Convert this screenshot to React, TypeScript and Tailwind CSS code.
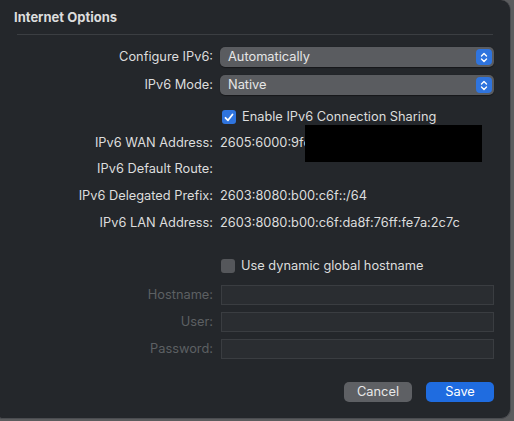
import React from 'react';

// --- small pieces of the sheet ---
const Label = ({ children, dim }: { children: React.ReactNode; dim?: boolean }) => (
  <div className={`w-[213px] shrink-0 text-right ${dim ? 'text-[#5d6063]' : 'text-[#dcdddd]'}`}>{children}</div>
);

const Stepper = () => (
  <div className="w-4 h-4 rounded-[4px] bg-[#2f74de] flex items-center justify-center">
    <svg width="8" height="11" viewBox="0 0 8 11" fill="none" stroke="white" strokeWidth="1.4" strokeLinecap="round" strokeLinejoin="round">
      <path d="M1.5 4 L4 1.5 L6.5 4" />
      <path d="M1.5 7 L4 9.5 L6.5 7" />
    </svg>
  </div>
);

const Select = ({ value }: { value: string }) => (
  <div className="flex-1 h-[20px] rounded-[5px] bg-[#5a5c60] flex items-center justify-between pl-[8px] pr-[2px] text-[#e6e6e6] shadow-[0_0.5px_1px_rgba(0,0,0,0.4)]">
    <span>{value}</span>
    <Stepper />
  </div>
);

const Check = ({ checked }: { checked: boolean }) =>
  checked ? (
    <div className="w-[14px] h-[14px] rounded-[3px] bg-[#2f74de] flex items-center justify-center">
      <svg width="10" height="9" viewBox="0 0 10 9" fill="none" stroke="white" strokeWidth="1.8" strokeLinecap="round" strokeLinejoin="round">
        <path d="M1.5 4.8 L4 7.3 L8.5 1.5" />
      </svg>
    </div>
  ) : (
    <div className="w-[14px] h-[14px] rounded-[3px] bg-[#55575b]" />
  );

const Input = () => <div className="flex-1 h-[20px] bg-[#2a2d31] border border-[#3a3d41]" />;

export default function App() {
  return (
    <div className="w-[514px] h-[421px] bg-[#5b5c5e] overflow-hidden" style={{ fontFamily: 'Inter, "Liberation Sans", sans-serif' }}>
      <div className="w-[511px] h-[419px] bg-[#24272b] rounded-r-[10px] rounded-bl-[2px] border-r border-b border-[#4a4c50] flex flex-col text-[12.8px] leading-none">
        {/* title */}
        <div className="pl-[14px] pt-[11px] h-[34px] font-bold text-[13px] text-[#dcdddd]">Internet Options</div>
        <div className="mx-[17px] h-px bg-[#3b3e42]" />

        <div className="pr-[16px] flex flex-col">
          <div className="flex items-center gap-[7px] mt-[12px]">
            <Label>Configure IPv6:</Label>
            <Select value="Automatically" />
          </div>
          <div className="flex items-center gap-[7px] mt-[8px]">
            <Label>IPv6 Mode:</Label>
            <Select value="Native" />
          </div>

          <div className="flex items-center gap-[6px] ml-[222px] mt-[15px] text-[#dcdddd]">
            <Check checked />
            <span>Enable IPv6 Connection Sharing</span>
          </div>

          {/* addresses */}
          <div className="flex items-center gap-[7px] mt-[1px] h-[37px] relative">
            <Label>IPv6 WAN Address:</Label>
            <span className="text-[#dcdddd]">2605:6000:9fc</span>
            <div className="absolute left-[305px] top-0 w-[177px] h-[37px] bg-black" />
          </div>
          <div className="flex items-center gap-[7px] h-[27px] -mt-[6px]">
            <Label>IPv6 Default Route:</Label>
          </div>
          <div className="flex items-center gap-[7px] h-[27px]">
            <Label>IPv6 Delegated Prefix:</Label>
            <span className="text-[#dcdddd]">2603:8080:b00:c6f::/64</span>
          </div>
          <div className="flex items-center gap-[7px] h-[27px]">
            <Label>IPv6 LAN Address:</Label>
            <span className="text-[#dcdddd]">2603:8080:b00:c6f:da8f:76ff:fe7a:2c7c</span>
          </div>

          <div className="flex items-center gap-[6px] ml-[221px] mt-[22px] text-[#dcdddd]">
            <Check checked={false} />
            <span>Use dynamic global hostname</span>
          </div>

          {/* disabled credentials */}
          <div className="flex items-center gap-[8px] mt-[12px]">
            <Label dim>Hostname:</Label>
            <Input />
          </div>
          <div className="flex items-center gap-[8px] mt-[7px]">
            <Label dim>User:</Label>
            <Input />
          </div>
          <div className="flex items-center gap-[8px] mt-[7px]">
            <Label dim>Password:</Label>
            <Input />
          </div>

          {/* buttons */}
          <div className="flex justify-end gap-[14px] mt-[23px]">
            <button className="w-[68px] h-[20px] rounded-[5px] bg-[#5e6064] text-[#e8e8e8] text-[12.8px]">Cancel</button>
            <button className="w-[68px] h-[20px] rounded-[5px] bg-[#1f6ce0] text-white text-[12.8px]">Save</button>
          </div>
        </div>
      </div>
    </div>
  );
}
